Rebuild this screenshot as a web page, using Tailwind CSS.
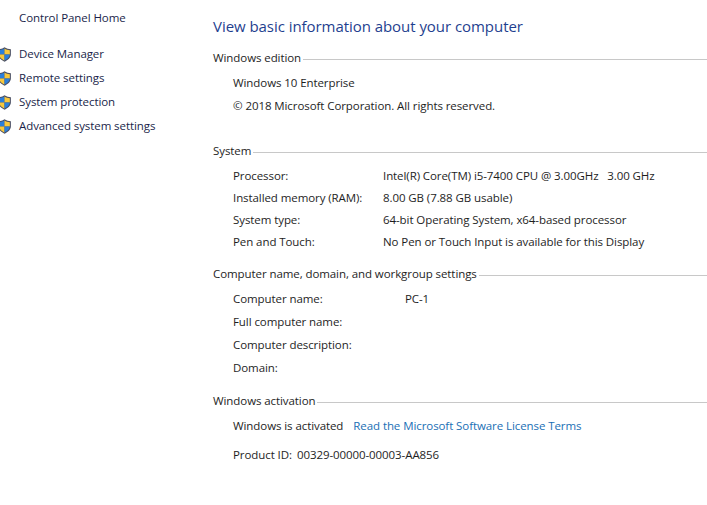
<!DOCTYPE html>
<html lang="en">
<head>
  <meta charset="UTF-8">
  <title>System</title>
  <script src="https://cdn.jsdelivr.net/npm/@tailwindcss/browser@4"></script>
</head>
<body class="bg-white text-[#1e1e1e] text-[11.5px] tracking-[-0.08px] leading-[16px] font-['Open_Sans',sans-serif] w-[707px] h-[505px] overflow-hidden">
  <svg width="0" height="0" class="absolute">
    <symbol id="shield" viewBox="0 0 16 16">
      <path d="M8 .3 C6 1.7 3.5 2.4 1.2 2.4 V8 C1.2 11.5 5 14.4 8 15.7 C11 14.4 14.8 11.5 14.8 8 V2.4 C12.5 2.4 10 1.7 8 .3Z" fill="#4a4f63"/>
      <path d="M8 1.6 V8 H2.3 V3.4 C4.4 3.3 6.4 2.7 8 1.6Z" fill="#2a7fdc"/>
      <path d="M8 1.6 C9.6 2.7 11.6 3.3 13.7 3.4 V8 H8Z" fill="#f8c83c"/>
      <path d="M2.3 8 H8 V14.4 C5.5 13.2 2.5 11 2.3 8Z" fill="#f8c83c"/>
      <path d="M8 8 H13.7 C13.5 11 10.5 13.2 8 14.4Z" fill="#2a7fdc"/>
    </symbol>
  </svg>

  <div class="flex">
    <nav class="w-[213px] shrink-0 pt-[10px] text-[#1a1f4a]">
      <div class="pl-[19px] h-[16px]">Control Panel Home</div>
      <ul class="mt-[20px] flex flex-col gap-[8px]">
        <li class="flex items-center h-[16px]"><svg class="w-[15px] h-[15px] shrink-0 mr-[7px] -ml-[3px]"><use href="#shield"/></svg>Device Manager</li>
        <li class="flex items-center h-[16px]"><svg class="w-[15px] h-[15px] shrink-0 mr-[7px] -ml-[3px]"><use href="#shield"/></svg>Remote settings</li>
        <li class="flex items-center h-[16px]"><svg class="w-[15px] h-[15px] shrink-0 mr-[7px] -ml-[3px]"><use href="#shield"/></svg>System protection</li>
        <li class="flex items-center h-[16px]"><svg class="w-[15px] h-[15px] shrink-0 mr-[7px] -ml-[3px]"><use href="#shield"/></svg>Advanced system settings</li>
      </ul>
    </nav>

    <main class="flex-1 pt-[15px]">
      <h1 class="text-[#1f3f8f] text-[15px] tracking-[-0.05px] leading-[22px] font-normal">View basic information about your computer</h1>

      <section class="mt-[13px]">
        <div class="flex items-center gap-[2px] h-[16px]"><span>Windows edition</span><span class="flex-1 border-t border-[#c8c8c8] mt-[2px]"></span></div>
        <div class="pl-[20px] mt-[9px] flex flex-col gap-[7px]">
          <div>Windows 10 Enterprise</div>
          <div>© 2018 Microsoft Corporation. All rights reserved.</div>
        </div>
      </section>

      <section class="mt-[29px]">
        <div class="flex items-center gap-[2px] h-[16px]"><span>System</span><span class="flex-1 border-t border-[#c8c8c8] mt-[2px]"></span></div>
        <div class="pl-[20px] mt-[9px] grid grid-cols-[150px_1fr] gap-y-[6px]">
          <div>Processor:</div><div>Intel(R) Core(TM) i5-7400 CPU @ 3.00GHz &nbsp; 3.00 GHz</div>
          <div>Installed memory (RAM):</div><div>8.00 GB (7.88 GB usable)</div>
          <div>System type:</div><div>64-bit Operating System, x64-based processor</div>
          <div>Pen and Touch:</div><div>No Pen or Touch Input is available for this Display</div>
        </div>
      </section>

      <section class="mt-[16px]">
        <div class="flex items-center gap-[2px] h-[16px]"><span>Computer name, domain, and workgroup settings</span><span class="flex-1 border-t border-[#c8c8c8] mt-[2px]"></span></div>
        <div class="pl-[20px] mt-[9px] grid grid-cols-[172px_1fr] gap-y-[7px]">
          <div>Computer name:</div><div>PC-1</div>
          <div>Full computer name:</div><div></div>
          <div>Computer description:</div><div></div>
          <div>Domain:</div><div></div>
        </div>
      </section>

      <section class="mt-[17px]">
        <div class="flex items-center gap-[2px] h-[16px]"><span>Windows activation</span><span class="flex-1 border-t border-[#c8c8c8] mt-[2px]"></span></div>
        <div class="pl-[20px] mt-[9px]">
          <div class="flex gap-[10px]"><span>Windows is activated</span><a class="text-[#1a6fb5]">Read the Microsoft Software License Terms</a></div>
          <div class="flex gap-[5px] mt-[13px]"><span>Product ID:</span><span>00329-00000-00003-AA856</span></div>
        </div>
      </section>
    </main>
  </div>
</body>
</html>
